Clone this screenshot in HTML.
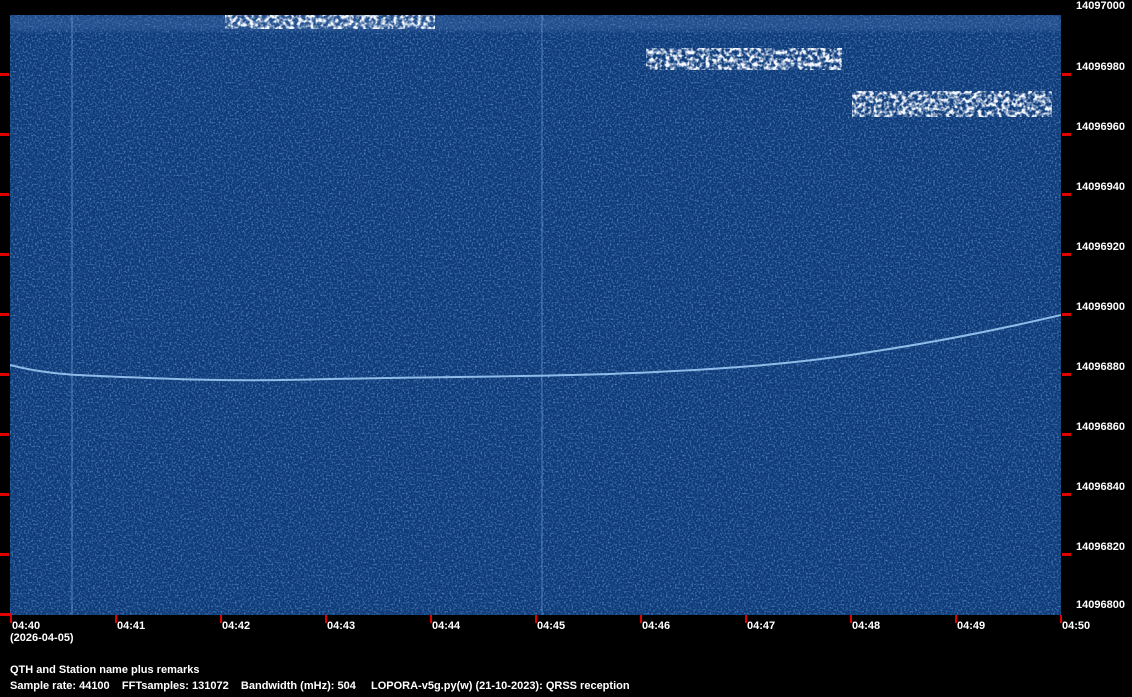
<!DOCTYPE html>
<html><head><meta charset="utf-8"><style>
html,body{margin:0;padding:0;background:#000;width:1132px;height:697px;overflow:hidden}
body{position:relative;font-family:"Liberation Sans",sans-serif;font-weight:bold;font-size:11px;color:#fff}
.t{position:absolute;white-space:pre;line-height:12px}
.r{position:absolute;background:#e00000}
</style></head><body>
<svg style="position:absolute;left:10px;top:15px" width="1051" height="600">
<defs>
<filter id="n" x="0" y="0" width="100%" height="100%">
<feTurbulence type="fractalNoise" baseFrequency="0.55" numOctaves="2" seed="3"/>
<feColorMatrix type="matrix" values="0 0 0 0 0.2  0 0 0 0 0.45  0 0 0 0 0.85  0 0 0 1.6 -0.75"/>
</filter>
<filter id="s" x="0" y="0" width="100%" height="100%">
<feTurbulence type="fractalNoise" baseFrequency="0.25" numOctaves="2" seed="7"/>
<feColorMatrix type="matrix" values="0 0 0 0 0.92  0 0 0 0 0.95  0 0 0 0 1  0 0 0 3.5 -1.4"/>
<feComposite in2="SourceGraphic" operator="in"/>
</filter>
<filter id="b"><feGaussianBlur stdDeviation="2"/></filter>
</defs>
<rect width="1051" height="600" fill="#0e3a78"/>
<rect width="1051" height="600" filter="url(#n)"/>
<rect x="0" y="0" width="1051" height="16" fill="#4a76b0" opacity="0.35" filter="url(#b)"/>
<g filter="url(#s)">
<rect x="215" y="0" width="210" height="14" fill="#fff"/>
<rect x="636" y="33" width="196" height="22" fill="#fff"/>
<rect x="842" y="76" width="200" height="26" fill="#fff"/>
</g>
<line x1="62" y1="0" x2="62" y2="600" stroke="#6f9fd8" stroke-width="1.2" opacity="0.6"/>
<line x1="532" y1="0" x2="532" y2="600" stroke="#6f9fd8" stroke-width="1.2" opacity="0.55"/>
<path d="M0,350 C30,358 60,360 90,361 C160,364 220,367 320,364 C420,362 500,362 600,359 C700,355 780,350 860,337 C940,325 1000,312 1051,300" fill="none" stroke="#8fbbe8" stroke-width="2"/>
</svg>
<div class="r" style="left:0;top:73px;width:9px;height:3px"></div>
<div class="r" style="left:0;top:133px;width:9px;height:3px"></div>
<div class="r" style="left:0;top:193px;width:9px;height:3px"></div>
<div class="r" style="left:0;top:253px;width:9px;height:3px"></div>
<div class="r" style="left:0;top:313px;width:9px;height:3px"></div>
<div class="r" style="left:0;top:373px;width:9px;height:3px"></div>
<div class="r" style="left:0;top:433px;width:9px;height:3px"></div>
<div class="r" style="left:0;top:493px;width:9px;height:3px"></div>
<div class="r" style="left:0;top:553px;width:9px;height:3px"></div>
<div class="r" style="left:0;top:613px;width:11px;height:3px"></div>
<div class="r" style="left:1062px;top:73px;width:9px;height:3px"></div>
<div class="r" style="left:1062px;top:133px;width:9px;height:3px"></div>
<div class="r" style="left:1062px;top:193px;width:9px;height:3px"></div>
<div class="r" style="left:1062px;top:253px;width:9px;height:3px"></div>
<div class="r" style="left:1062px;top:313px;width:9px;height:3px"></div>
<div class="r" style="left:1062px;top:373px;width:9px;height:3px"></div>
<div class="r" style="left:1062px;top:433px;width:9px;height:3px"></div>
<div class="r" style="left:1062px;top:493px;width:9px;height:3px"></div>
<div class="r" style="left:1062px;top:553px;width:9px;height:3px"></div>
<div class="r" style="left:10px;top:615px;width:2px;height:8px"></div>
<div class="r" style="left:115px;top:615px;width:2px;height:8px"></div>
<div class="r" style="left:220px;top:615px;width:2px;height:8px"></div>
<div class="r" style="left:325px;top:615px;width:2px;height:8px"></div>
<div class="r" style="left:430px;top:615px;width:2px;height:8px"></div>
<div class="r" style="left:535px;top:615px;width:2px;height:8px"></div>
<div class="r" style="left:640px;top:615px;width:2px;height:8px"></div>
<div class="r" style="left:745px;top:615px;width:2px;height:8px"></div>
<div class="r" style="left:850px;top:615px;width:2px;height:8px"></div>
<div class="r" style="left:955px;top:615px;width:2px;height:8px"></div>
<div class="r" style="left:1060px;top:615px;width:2px;height:8px"></div>
<div class="t" style="left:1076px;top:0px">14097000</div>
<div class="t" style="left:1076px;top:61px">14096980</div>
<div class="t" style="left:1076px;top:121px">14096960</div>
<div class="t" style="left:1076px;top:181px">14096940</div>
<div class="t" style="left:1076px;top:241px">14096920</div>
<div class="t" style="left:1076px;top:301px">14096900</div>
<div class="t" style="left:1076px;top:361px">14096880</div>
<div class="t" style="left:1076px;top:421px">14096860</div>
<div class="t" style="left:1076px;top:481px">14096840</div>
<div class="t" style="left:1076px;top:541px">14096820</div>
<div class="t" style="left:1076px;top:599px">14096800</div>
<div class="t" style="left:12px;top:620px">04:40</div>
<div class="t" style="left:117px;top:620px">04:41</div>
<div class="t" style="left:222px;top:620px">04:42</div>
<div class="t" style="left:327px;top:620px">04:43</div>
<div class="t" style="left:432px;top:620px">04:44</div>
<div class="t" style="left:537px;top:620px">04:45</div>
<div class="t" style="left:642px;top:620px">04:46</div>
<div class="t" style="left:747px;top:620px">04:47</div>
<div class="t" style="left:852px;top:620px">04:48</div>
<div class="t" style="left:957px;top:620px">04:49</div>
<div class="t" style="left:1062px;top:620px">04:50</div>
<div class="t" style="left:10px;top:632px">(2026-04-05)</div>
<div class="t" style="left:10px;top:664px">QTH and Station name plus remarks</div>
<div class="t" style="left:10px;top:680px">Sample rate: 44100    FFTsamples: 131072    Bandwidth (mHz): 504</div>
<div class="t" style="left:371px;top:680px">LOPORA-v5g.py(w) (21-10-2023): QRSS reception</div>
</body></html>
